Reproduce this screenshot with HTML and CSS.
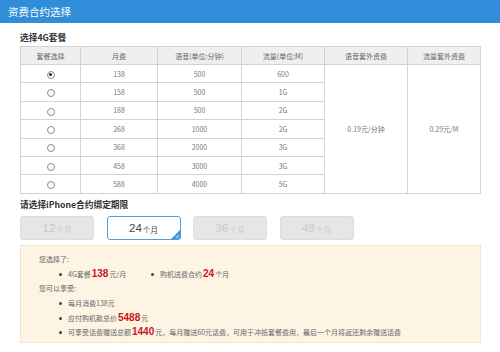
FILE: index.html
```html
<!DOCTYPE html>
<html lang="zh">
<head>
<meta charset="utf-8">
<link rel="stylesheet" href="styles.css">
</head>
<body>
<div class="header">资费合约选择</div>
<div class="content">
  <div class="sec-title">选择4G套餐</div>
  <table class="plans">
    <colgroup>
      <col style="width:60px"><col style="width:77px"><col style="width:84px"><col style="width:83px"><col style="width:83px"><col style="width:73px">
    </colgroup>
    <tr class="head"><th>套餐选择</th><th>月费</th><th>语音(单位:分钟)</th><th>流量(单位:M)</th><th>语音套外资费</th><th>流量套外资费</th></tr>
    <tr><td><span class="radio on"></span></td><td>138</td><td>500</td><td>600</td><td rowspan="7">0.19元/分钟</td><td rowspan="7">0.29元/M</td></tr>
    <tr><td><span class="radio"></span></td><td>158</td><td>500</td><td>1G</td></tr>
    <tr><td><span class="radio"></span></td><td>188</td><td>500</td><td>2G</td></tr>
    <tr><td><span class="radio"></span></td><td>268</td><td>1000</td><td>2G</td></tr>
    <tr><td><span class="radio"></span></td><td>368</td><td>2000</td><td>3G</td></tr>
    <tr><td><span class="radio"></span></td><td>458</td><td>3000</td><td>3G</td></tr>
    <tr><td><span class="radio"></span></td><td>588</td><td>4000</td><td>5G</td></tr>
  </table>
  <div class="sec-title sec2">请选择iPhone合约绑定期限</div>
  <div class="terms">
    <div class="term">12<span>个月</span></div>
    <div class="term sel">24<span>个月</span><svg class="corner" width="9" height="9" viewBox="0 0 9 9"><path d="M9 0 V9 H0 Z" fill="#3d95dd"/><path d="M4.6 6.4 L5.8 7.5 L7.8 5" stroke="#fff" stroke-width="0.9" fill="none"/></svg></div>
    <div class="term">36<span>个月</span></div>
    <div class="term">48<span>个月</span></div>
  </div>
  <div class="info">
    <div class="line">您选择了:</div>
    <div class="bullets row">
      <div class="item first">4G套餐<b>138</b>元/月</div>
      <div class="item">购机送费合约<b>24</b>个月</div>
    </div>
    <div class="line">您可以享受:</div>
    <div class="bullets">
      <div class="item">每月消费138元</div>
      <div class="item">应付购机款总价<b>5488</b>元</div>
      <div class="item">可享受话费赠送总额<b>1440</b>元，每月赠送60元话费，可用于冲抵套餐费用，最后一个月将返还剩余赠送话费</div>
    </div>
  </div>
</div>
</body>
</html>
```
FILE: styles.css
```css
* { box-sizing: border-box; }
body {
  margin: 0;
  width: 500px;
  height: 352px;
  overflow: hidden;
  background: #fff;
  font-family: "Noto Sans CJK SC", "Liberation Sans", sans-serif;
  color: #666;
}
.header {
  height: 23px;
  background: #2f8dd9;
  color: #fff;
  font-size: 10.5px;
  line-height: 23px;
  padding-left: 8px;
}
.content {
  padding: 9px 0 0 20px;
  width: 481px;
}
.sec-title {
  font-size: 8.7px;
  font-weight: bold;
  color: #333;
  line-height: 12px;
  height: 14px;
}
.sec2 { margin-top: 5px; height: 17px; }
.plans {
  border-collapse: collapse;
  width: 461px;
  table-layout: fixed;
  font-size: 7px;
  color: #777;
}
.plans th, .plans td {
  border: 1px solid #d3d3d3;
  text-align: center;
  padding: 0;
  height: 18.4px;
  font-weight: normal;
}
.plans th { background: #efefef; color: #666; height: 18px; }
.radio {
  display: inline-block;
  width: 8px;
  height: 8px;
  border: 1px solid #8a8a8a;
  border-radius: 50%;
  vertical-align: middle;
  position: relative;
  background: #fff;
}
.radio.on::after {
  content: "";
  position: absolute;
  left: 1.5px;
  top: 1.5px;
  width: 3px;
  height: 3px;
  border-radius: 50%;
  background: #222;
}
.terms {
  display: flex;
  gap: 12.5px;
}
.term {
  width: 74px;
  height: 24px;
  background: #e6e6e6;
  border: 1px solid #dedede;
  border-radius: 3px;
  color: #c8c8c8;
  font-family: "Liberation Sans", "Noto Sans CJK SC", sans-serif;
  font-size: 11.5px;
  display: flex;
  align-items: center;
  justify-content: center;
  position: relative;
}
.term span { font-size: 7.5px; margin-top: 3px; margin-left: 1px; font-family: "Noto Sans CJK SC", sans-serif; }
.term.sel {
  background: #fff;
  border: 1.5px solid #4b9ee0;
  color: #444;
}
.corner { position: absolute; right: 0; bottom: 0; border-bottom-right-radius: 2px; }
.info {
  margin-top: 5px;
  width: 461px;
  height: 98px;
  background: #fdf4e4;
  border: 1px solid #efe5d5;
  padding: 6px 0 0 18px;
  font-size: 7px;
  color: #666;
}
.line { height: 15px; line-height: 15px; }
.bullets { padding-left: 20px; }
.bullets.row { display: flex; }
.bullets.row .first { width: 92px; }
.item { height: 14.5px; line-height: 14.5px; position: relative; padding-left: 9px; white-space: nowrap; }
.item::before {
  content: "";
  position: absolute;
  left: 0;
  top: 6px;
  width: 3px;
  height: 3px;
  background: #444;
  border-radius: 50%;
}
.item b {
  color: #c8161d;
  font-family: "Liberation Sans", sans-serif;
  font-size: 10px;
  font-weight: bold;
  margin: 0 1px;
}
```
